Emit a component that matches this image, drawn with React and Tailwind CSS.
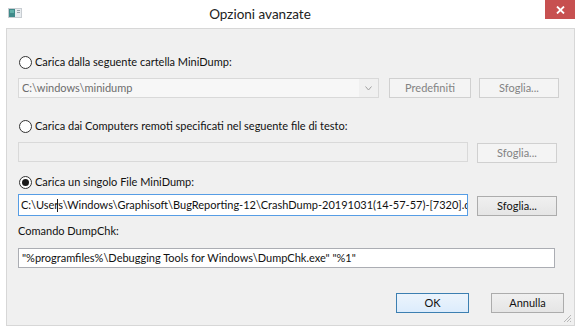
import React from "react";

const font = { fontFamily: 'Lato, "Noto Sans", sans-serif' };

const Radio = ({ checked }) => (
  <span className="w-[13px] h-[13px] rounded-full border border-[#333333] bg-white flex items-center justify-center shrink-0">
    {checked && <span className="w-[7px] h-[7px] rounded-full bg-[#1a1a1a]" />}
  </span>
);

const WinButton = ({ children, disabled, primary, className = "" }) => (
  <div
    className={`h-[20px] flex items-center justify-center border text-[11px] ${
      disabled
        ? "border-[#d0d0d0] bg-[#f4f4f4] text-[#838383]"
        : primary
        ? "border-[#3c7fb1] bg-gradient-to-b from-[#ecf4fc] to-[#dcecfc] text-[#111111]"
        : "border-[#acacac] bg-gradient-to-b from-[#f0f0f0] to-[#e5e5e5] text-[#111111]"
    } ${className}`}
  >
    {children}
  </div>
);

export default function App() {
  return (
    <div className="w-[583px] h-[333px] bg-white flex flex-col overflow-hidden" style={font}>
      {/* title bar */}
      <div className="h-[28px] flex items-start shrink-0">
        <div className="ml-[8px] mt-[8px] w-[14px] h-[10px]">
          <svg width="14" height="10" viewBox="0 0 14 10">
            <rect x="0" y="0" width="14" height="10" fill="#c8cdd2" />
            <rect x="1" y="1" width="12" height="8" fill="#e8ecef" />
            <rect x="1" y="1" width="6" height="8" fill="#3f8a8a" />
            <rect x="2" y="2" width="4" height="3" fill="#5fb0a8" />
            <rect x="9" y="2" width="3" height="1" fill="#9aa3aa" />
            <rect x="9" y="4" width="3" height="1" fill="#9aa3aa" />
          </svg>
        </div>
        <div className="flex-1 mr-[47px] text-center text-[13.5px] leading-none pt-[8px] text-[#222222]">
          Opzioni avanzate
        </div>
        <div className="w-[30px] h-[19px] mr-[8px] bg-[#c75050] flex items-center justify-center">
          <svg width="9" height="8" viewBox="0 0 9 8">
            <path d="M1 0.5 L8 7.5 M8 0.5 L1 7.5" stroke="white" strokeWidth="1.8" />
          </svg>
        </div>
      </div>

      {/* client area */}
      <div className="ml-[6px] w-[569px] h-[298px] bg-[#f0f0f0] border border-[#d7d7d7] relative text-[11px] text-[#111111]">
        <div className="pl-[11px] flex flex-col">
          {/* option 1 */}
          <div className="mt-[25px] h-[16px] flex items-center gap-[3px] pl-[1px]">
            <Radio />
            <span>Carica dalla seguente cartella MiniDump:</span>
          </div>
          <div className="mt-[8px] flex items-center">
            <div className="w-[361px] h-[20px] border border-[#d9d9d9] bg-[#f7f7f7] flex items-center">
              <span className="flex-1 pl-[3px] text-[#6d6d6d]">C:\windows\minidump</span>
              <span className="w-[19px] h-full bg-[#f0f0f0] flex items-center justify-center">
                <svg width="7" height="5" viewBox="0 0 7 5">
                  <path d="M0.5 0.5 L3.5 4 L6.5 0.5" stroke="#a0a0a0" fill="none" strokeWidth="1" />
                </svg>
              </span>
            </div>
            <WinButton disabled className="ml-[10px] w-[82px]">Predefiniti</WinButton>
            <WinButton disabled className="ml-[8px] w-[80px]">Sfoglia...</WinButton>
          </div>

          {/* option 2 */}
          <div className="mt-[20px] h-[16px] flex items-center gap-[3px] pl-[1px]">
            <Radio />
            <span>Carica dai Computers remoti specificati nel seguente file di testo:</span>
          </div>
          <div className="mt-[7px] flex items-center">
            <div className="w-[450px] h-[20px] border border-[#d9d9d9] bg-[#f0f0f0]" />
            <WinButton disabled className="ml-[9px] w-[80px] mt-[2px]">Sfoglia...</WinButton>
          </div>

          {/* option 3 */}
          <div className="mt-[11px] h-[16px] flex items-center gap-[3px] pl-[1px]">
            <Radio checked />
            <span>Carica un singolo File MiniDump:</span>
          </div>
          <div className="mt-[4px] flex items-center">
            <div className="w-[450px] h-[22px] border border-[#569de5] bg-white flex items-center overflow-hidden relative">
              <span className="pl-[2px] whitespace-nowrap">
                C:\Users\Windows\Graphisoft\BugReporting-12\CrashDump-20191031(14-57-57)-[7320].dmp
              </span>
              <span className="absolute left-[38px] top-[4px] w-[1px] h-[13px] bg-[#1a1a1a]" />
            </div>
            <WinButton className="ml-[9px] w-[80px] mt-[2px]">Sfoglia...</WinButton>
          </div>

          {/* command */}
          <div className="mt-[7px] h-[16px] flex items-center">Comando DumpChk:</div>
          <div className="mt-[9px] w-[537px] h-[20px] border border-[#abadb3] bg-white flex items-center pl-[3px]">
            "%programfiles%\Debugging Tools for Windows\DumpChk.exe" "%1"
          </div>

          {/* footer buttons */}
          <div className="mt-[25px] flex justify-end pr-[10px] gap-[22px]">
            <WinButton primary className="w-[73px]">OK</WinButton>
            <WinButton className="w-[73px]">Annulla</WinButton>
          </div>
        </div>

        {/* resize grip */}
        <svg className="absolute right-[2px] bottom-[2px]" width="9" height="9" viewBox="0 0 9 9">
          <path d="M8 1 L1 8 M8 4 L4 8 M8 7 L7 8" stroke="#b8b8b8" strokeWidth="1" />
        </svg>
      </div>
    </div>
  );
}
